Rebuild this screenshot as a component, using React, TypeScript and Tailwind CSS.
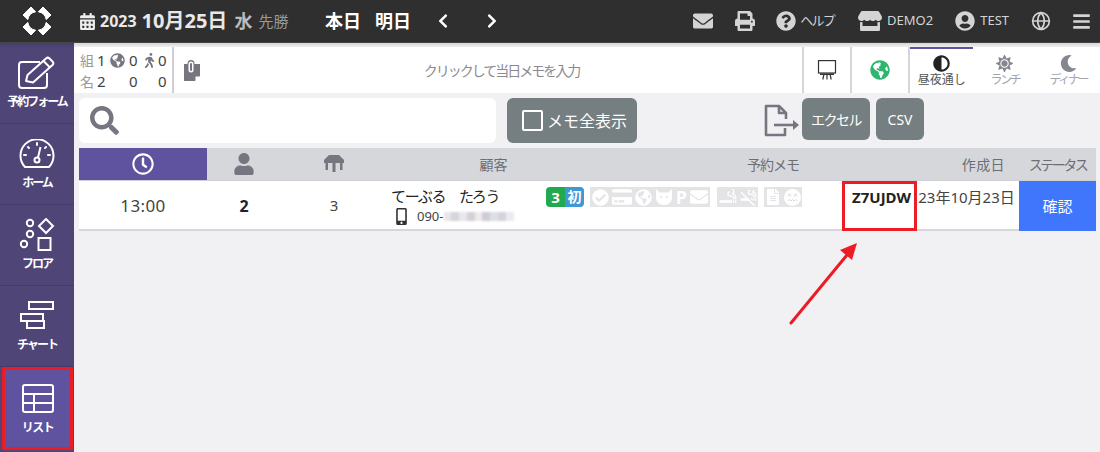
import React from "react";
import {
  FaAdjust,
  FaBars,
  FaCalendarAlt,
  FaCheckCircle,
  FaChevronLeft,
  FaChevronRight,
  FaCreditCard,
  FaEnvelope,
  FaFileAlt,
  FaGlobeAmericas,
  FaMobileAlt,
  FaMoon,
  FaPrint,
  FaQuestionCircle,
  FaRegClock,
  FaSearch,
  FaStore,
  FaSun,
  FaUser,
  FaUserCircle,
  FaWalking,
} from "react-icons/fa";
import { MdSmokeFree, MdSmokingRooms } from "react-icons/md";
import { Globe } from "lucide-react";

const font = "[font-family:'Noto_Sans','Noto_Sans_CJK_JP',sans-serif]";
const tableCols = "grid-cols-[128px_74px_106px_157px_298px_75px_102px_77px]";

function Logo() {
  const petal = "M9 1 L13.6 5.8 A 9.6 9.6 0 0 0 5.8 13.6 L1 9 Z";
  return (
    <svg width="30" height="30" viewBox="0 0 30 30" fill="#fff" stroke="#fff" strokeWidth="1" strokeLinejoin="round">
      <path d={petal} />
      <path d={petal} transform="rotate(90 15 15)" />
      <path d={petal} transform="rotate(180 15 15)" />
      <path d={petal} transform="rotate(270 15 15)" />
    </svg>
  );
}

function EditIcon() {
  return (
    <svg width="38" height="34" viewBox="0 0 38 34" fill="none" stroke="#fff" strokeWidth="2" strokeLinejoin="round">
      <path d="M29 17v12a3 3 0 0 1-3 3H4a3 3 0 0 1-3-3V9a3 3 0 0 1 3-3h18" />
      <path d="M8 25l1.5-6L28 2.5a2.5 2.5 0 0 1 3.5 0l3 3a2.5 2.5 0 0 1 0 3.5L15 26.5Z" />
      <path d="M25.5 5l6.5 6.5" />
    </svg>
  );
}

function GaugeIcon() {
  return (
    <svg width="36" height="30" viewBox="0 0 36 30" fill="none" stroke="#fff" strokeWidth="2">
      <path d="M6 28 A16.5 16.5 0 1 1 30 28 Z" strokeLinejoin="round" />
      <circle cx="18" cy="21" r="2.5" />
      <path d="M19 18.5 L21.5 8" />
      <path d="M18 4v2M9 8l1 1M5 16h2M29 16h2M27 8l-1 1" strokeLinecap="round" />
    </svg>
  );
}

function FloorIcon() {
  return (
    <svg width="36" height="34" viewBox="0 0 36 34" fill="none" stroke="#fff" strokeWidth="2">
      <circle cx="11" cy="5" r="3.2" />
      <circle cx="11" cy="16" r="3.2" />
      <circle cx="5" cy="26" r="3.2" />
      <path d="M27 1 L34 8 L27 15 L20 8 Z" />
      <rect x="19.5" y="20" width="12" height="12" />
    </svg>
  );
}

function ChartIcon() {
  return (
    <svg width="36" height="30" viewBox="0 0 36 30" fill="none" stroke="#fff" strokeWidth="2">
      <rect x="10" y="1" width="24" height="7" />
      <rect x="2" y="13" width="22" height="7" />
      <rect x="8" y="20" width="17" height="7" />
    </svg>
  );
}

function ListIcon() {
  return (
    <svg width="32" height="29" viewBox="0 0 32 29" fill="none" stroke="#fff" strokeWidth="2">
      <rect x="1" y="1" width="30" height="27" rx="2" />
      <path d="M1 10h30M1 19h30M12 10v18" />
    </svg>
  );
}

function NoteClipIcon() {
  return (
    <svg width="18" height="21" viewBox="0 0 18 21">
      <path d="M1 4h16v12l-5 5H1Z" fill="#75767f" />
      <path d="M12.5 21v-4.5H17Z" fill="#fff" />
      <rect x="4.5" y="0" width="7" height="14" rx="3.5" fill="#75767f" />
      <rect x="5.5" y="1.5" width="5" height="11" rx="2.5" fill="#fff" />
      <rect x="7" y="3" width="2" height="8" rx="1" fill="#75767f" />
    </svg>
  );
}

function BoardIcon() {
  return (
    <svg width="20" height="20" viewBox="0 0 20 20" fill="none" stroke="#333" strokeWidth="1.2">
      <rect x="1.5" y="0.6" width="17" height="12.4" />
      <path d="M3 14.2h14" strokeWidth="1.6" />
      <path d="M7 14l-1.2 5.5M10 14v5.5M13 14l1.2 5.5" />
    </svg>
  );
}

function TableIcon() {
  return (
    <svg width="20" height="18" viewBox="0 0 20 18" fill="#75767f">
      <path d="M5 0h10l5 5v3H0V5Z" />
      <rect x="8.5" y="8" width="3" height="9" />
      <rect x="1.5" y="8" width="2.5" height="7" />
      <rect x="16" y="8" width="2.5" height="7" />
    </svg>
  );
}

function ExportIcon() {
  return (
    <svg width="36" height="34" viewBox="0 0 36 34" fill="none" stroke="#75767f" strokeWidth="2.6">
      <path d="M21 24v7H2V2h13l7 7v6" strokeLinejoin="round" />
      <path d="M15 2v7h7" strokeLinejoin="round" />
      <path d="M10 21h21" />
      <path d="M29 16l6 5-6 5Z" fill="#75767f" stroke="none" />
    </svg>
  );
}

function CatHeadIcon() {
  return (
    <svg width="18" height="16" viewBox="0 0 18 16">
      <path d="M1 0l4 3.5h8L17 0v9c0 4-3.5 7-8 7s-8-3-8-7Z" fill="#fff" />
      <circle cx="6" cy="8" r="1" fill="#e4e4e6" />
      <circle cx="12" cy="8" r="1" fill="#e4e4e6" />
    </svg>
  );
}

function DizzyFaceIcon() {
  return (
    <svg width="17" height="17" viewBox="0 0 17 17">
      <circle cx="8.5" cy="8.5" r="8.5" fill="#fff" />
      <path d="M4 4.5l3 3M7 4.5l-3 3M10 4.5l3 3M13 4.5l-3 3M3.5 12l2-1.5 1.5 1.5 1.5-1.5 1.5 1.5 1.5-1.5 2 1.5" fill="none" stroke="#d8d8da" strokeWidth="1" />
    </svg>
  );
}

const navItems = [
  { label: "予約フォーム", icon: <EditIcon /> },
  { label: "ホーム", icon: <GaugeIcon /> },
  { label: "フロア", icon: <FloorIcon /> },
  { label: "チャート", icon: <ChartIcon /> },
];

function Sidebar() {
  return (
    <nav className="w-[74px] shrink-0 bg-[#4f4577] flex flex-col">
      {navItems.map((item) => (
        <div
          key={item.label}
          className="h-[81px] border-b border-[#443b68] flex flex-col items-center justify-center gap-[3px] pb-[2px]"
        >
          <div className="h-[36px] flex items-center">{item.icon}</div>
          <span className="text-[12px] leading-4 font-bold text-white whitespace-nowrap tracking-[-2px]">{item.label}</span>
        </div>
      ))}
      <div className="h-[83px] pl-[2px] pr-[1px]">
        <div className="h-full border-[3px] border-[#ed1c24] bg-[#5f53a0] flex flex-col items-center gap-[7px] pt-[14px]">
          <ListIcon />
          <span className="text-[12px] leading-4 font-bold text-white tracking-[-1.5px]">リスト</span>
        </div>
      </div>
    </nav>
  );
}

function TopBar() {
  return (
    <header className="h-[43px] bg-[#2f2f2f] border-b border-[#444] flex items-center text-white shrink-0 relative z-10 shadow-[0_2px_3px_rgba(0,0,0,0.12)]">
      <div className="w-[74px] flex justify-center">
        <Logo />
      </div>
      <div className="flex items-center ml-[5px] w-[246px] whitespace-nowrap">
        <FaCalendarAlt size={17} color="#eee" />
        <span className="text-[16px] font-bold text-[#e8e8e8] ml-[4px]">2023</span>
        <span className="text-[20px] font-bold text-[#e8e8e8] ml-[5px]">10月25日</span>
        <span className="text-[18px] font-bold text-[#bbb] ml-[7px]">水</span>
        <span className="text-[15px] text-[#999] ml-[6px]">先勝</span>
      </div>
      <div className="flex items-center gap-[14px] text-[18px] font-bold">
        <span>本日</span>
        <span>明日</span>
      </div>
      <FaChevronLeft size={16} className="ml-[24px]" />
      <FaChevronRight size={16} className="ml-[33px]" />
      <div className="ml-auto flex items-center text-[#d4d4d4] text-[13px]">
        <FaEnvelope size={20} />
        <FaPrint size={20} className="ml-[22px]" />
        <FaQuestionCircle size={20} className="ml-[21px]" />
        <span className="ml-[4px] tracking-[-1.7px]">ヘルプ</span>
        <FaStore size={24} className="ml-[24px]" />
        <span className="ml-[5px]">DEMO2</span>
        <FaUserCircle size={20} className="ml-[22px]" />
        <span className="ml-[5px]">TEST</span>
        <Globe size={20} className="ml-[22px]" />
        <FaBars size={19} className="ml-[21px] mr-[9px]" />
      </div>
    </header>
  );
}

function Shift({ icon, label, active }: { icon: React.ReactNode; label: string; active?: boolean }) {
  return (
    <div
      className={`flex-1 flex flex-col items-center justify-center border-t-2 ${
        active ? "border-[#5f53a0] text-[#555]" : "border-transparent text-[#a3a4ab]"
      }`}
    >
      <div className="h-[18px] flex items-center">{icon}</div>
      <span className={`text-[12px] leading-4 whitespace-nowrap ${active ? "" : "tracking-[-2.4px]"}`}>{label}</span>
    </div>
  );
}

function InfoBar() {
  return (
    <div className="h-[46px] mt-1 bg-white flex">
      <div className="w-[98px] pl-[6px] pt-[3px] text-[15px] leading-[21px] text-[#444]">
        <div className="flex items-center">
          <span className="text-[#999] text-[14px]">組</span>
          <span className="ml-[3px] w-[8px]">1</span>
          <FaGlobeAmericas size={15} color="#75767f" className="ml-[5px]" />
          <span className="ml-[4px] w-[8px]">0</span>
          <FaWalking size={15} color="#75767f" className="ml-[5px]" />
          <span className="ml-[1px]">0</span>
        </div>
        <div className="flex items-center">
          <span className="text-[#999] text-[14px]">名</span>
          <span className="ml-[3px] w-[8px]">2</span>
          <span className="ml-[24px] w-[8px]">0</span>
          <span className="ml-[21px]">0</span>
        </div>
      </div>
      <div className="flex-1 flex items-center border-l-2 border-[#d0d0d4]">
        <div className="pl-[9px]">
          <NoteClipIcon />
        </div>
        <div className="flex-1 text-center text-[14px] text-[#8a8a90] tracking-[-2px]">クリックして当日メモを入力</div>
      </div>
      <div className="w-[48px] flex items-center justify-center border-l-2 border-[#d6d6da]">
        <BoardIcon />
      </div>
      <div className="w-[58px] flex items-center justify-center border-l-2 border-[#d6d6da]">
        <FaGlobeAmericas size={20} color="#2eb66f" />
      </div>
      <div className="w-[192px] flex border-l-2 border-[#d6d6da]">
        <Shift active icon={<FaAdjust size={17} color="#222" />} label="昼夜通し" />
        <Shift icon={<FaSun size={17} color="#85868f" />} label="ランチ" />
        <Shift icon={<FaMoon size={17} color="#85868f" />} label="ディナー" />
      </div>
    </div>
  );
}

function ToolBar() {
  return (
    <div className="h-[45px] mt-[5px] pl-[5px] flex items-start">
      <div className="w-[417px] h-[45px] bg-white rounded-md flex items-center pl-[11px]">
        <FaSearch size={29} color="#75767f" />
      </div>
      <button className="ml-[11px] w-[130px] h-[45px] rounded-md bg-[#757e80] text-white text-[16px] flex items-center pl-[15px]">
        <span className="w-[21px] h-[21px] border-2 border-white rounded-[2px] mr-[4px]" />
        メモ全表示
      </button>
      <div className="ml-[127px] mt-[6px]">
        <ExportIcon />
      </div>
      <button className="ml-[2px] w-[68px] h-[42px] rounded-md bg-[#757e80] text-white text-[14px] tracking-[-1.5px]">エクセル</button>
      <button className="ml-[6px] w-[48px] h-[42px] rounded-md bg-[#757e80] text-white text-[14px]">CSV</button>
    </div>
  );
}

const memoIcon = "text-white";
const blurColors = ["#e8e6ea", "#d8d4da", "#e6e8ee", "#d4d0d6", "#efeaec", "#cfccd4", "#dedfe6", "#d6d2d8", "#e9ebf2"];

function Table() {
  return (
    <div className="mt-[5px] mx-[5px] w-[1017px] text-[#444]">
      <div className={`h-[33px] bg-[#d6d7db] grid ${tableCols} items-center text-[14px] text-[#6d6e75] border-b border-[#cfd0d5]`}>
        <div className="h-full bg-[#5f53a0] flex items-center justify-center">
          <FaRegClock size={22} color="#fff" />
        </div>
        <div className="flex justify-center">
          <FaUser size={22} color="#75767f" />
        </div>
        <div className="flex justify-center">
          <TableIcon />
        </div>
        <div className="text-center pl-[56px]">顧客</div>
        <div className="text-right pr-[43px] tracking-[-1px]">予約メモ</div>
        <div />
        <div className="text-right pr-[14px] whitespace-nowrap tracking-[0.4px]">作成日</div>
        <div className="text-center whitespace-nowrap tracking-[-2.5px]">ステータス</div>
      </div>
      <div className={`h-[50px] bg-white border-b-2 border-[#d6d7db] grid ${tableCols} text-[#444]`}>
        <div className="flex items-center justify-center text-[17px] tracking-[0.4px]">13:00</div>
        <div className="flex items-center justify-center text-[16px] font-bold text-[#222]">2</div>
        <div className="flex items-center justify-center text-[15px] pb-[2px]">3</div>
        <div className="pl-[4px] pt-[4px]">
          <div className="text-[15px] leading-[22px] text-[#222] whitespace-pre tracking-[-1.3px]">てーぶる　たろう</div>
          <div className="flex items-center text-[13px] leading-[18px]">
            <FaMobileAlt size={17} color="#333" className="ml-[2px]" />
            <span className="ml-[7px]">090-</span>
            <div className="flex w-[70px] h-[9px] blur-[1px]">
              {blurColors.map((c, i) => (
                <span key={i} className="flex-1" style={{ backgroundColor: c }} />
              ))}
            </div>
          </div>
        </div>
        <div className="pt-[6px] pl-[2px] flex items-start">
          <span className="w-[19px] h-[20px] rounded-l bg-[#22a94f] text-white text-[15px] leading-[20px] font-bold text-center">3</span>
          <span className="w-[19px] h-[20px] rounded-r bg-[#3f97d8] text-white text-[14px] leading-[20px] font-bold text-center">初</span>
          <div className="ml-[6px] h-[20px] w-[120px] bg-[#e4e4e6] flex items-center justify-between px-[2px]">
            <FaCheckCircle size={17} className={memoIcon} />
            <FaCreditCard size={20} className={memoIcon} />
            <FaGlobeAmericas size={17} className={memoIcon} />
            <CatHeadIcon />
            <span className="text-white text-[18px] leading-[20px] font-bold">P</span>
            <FaEnvelope size={18} className={memoIcon} />
          </div>
          <div className="ml-[7px] h-[20px] w-[41px] bg-[#e4e4e6] flex items-center justify-around">
            <MdSmokingRooms size={20} className={memoIcon} />
            <MdSmokeFree size={19} className={memoIcon} />
          </div>
          <div className="ml-[6px] h-[20px] w-[38px] bg-[#e4e4e6] flex items-center justify-around">
            <FaFileAlt size={16} className={memoIcon} />
            <DizzyFaceIcon />
          </div>
        </div>
        <div className="border-[3px] border-[#ed1c24] h-[50px] text-[15px] leading-[20px] font-bold text-[#222] text-center pt-[3px] pl-[4px]">Z7UJDW</div>
        <div className="text-[15px] leading-[20px] pt-[6px] whitespace-nowrap text-center pr-[3px]">23年10月23日</div>
        <div className="bg-[#3f76fb] text-white text-[15px] flex items-center justify-center">確認</div>
      </div>
    </div>
  );
}

export default function App() {
  return (
    <div className={`w-[1100px] h-[452px] overflow-hidden flex flex-col bg-[#f1f1f4] relative ${font}`}>
      <TopBar />
      <div className="flex flex-1 min-h-0">
        <Sidebar />
        <main className="flex-1 min-w-0">
          <InfoBar />
          <ToolBar />
          <Table />
        </main>
      </div>
      <svg className="absolute left-[785px] top-[238px]" width="80" height="90" viewBox="0 0 80 90">
        <path d="M6 85 L62 17" stroke="#ed1c24" strokeWidth="3" strokeLinecap="round" />
        <path d="M72 5 L55 12 L67 22 Z" fill="#ed1c24" />
      </svg>
    </div>
  );
}
